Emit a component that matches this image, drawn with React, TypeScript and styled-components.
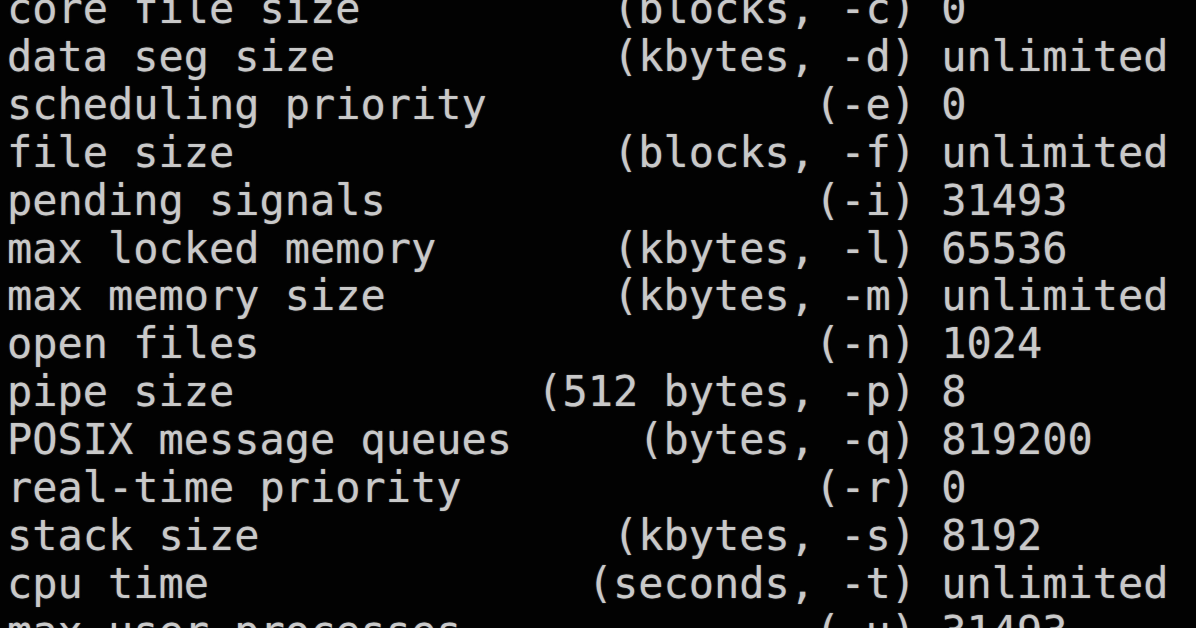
import React from "react";
import styled, { createGlobalStyle } from "styled-components";

const Global = createGlobalStyle`
  html, body { margin: 0; padding: 0; background: #000; overflow: hidden; }
  #root { width: 1196px; height: 628px; overflow: hidden; background: #000; }
`;

const Terminal = styled.div`
  width: 1196px;
  height: 628px;
  overflow: hidden;
  background: #020202;
  box-sizing: border-box;
  padding-left: 7px;
`;

const Output = styled.pre`
  margin: -15px 0 0 0;
  font-family: "DejaVu Sans Mono", monospace;
  font-size: 41.95px;
  line-height: 47.9px;
  color: #c9c9c9;
  text-shadow: 0 0 1.5px rgba(200, 200, 200, 0.55);
  white-space: pre;
`;

const lines = [
  "core file size          (blocks, -c) 0",
  "data seg size           (kbytes, -d) unlimited",
  "scheduling priority             (-e) 0",
  "file size               (blocks, -f) unlimited",
  "pending signals                 (-i) 31493",
  "max locked memory       (kbytes, -l) 65536",
  "max memory size         (kbytes, -m) unlimited",
  "open files                      (-n) 1024",
  "pipe size            (512 bytes, -p) 8",
  "POSIX message queues     (bytes, -q) 819200",
  "real-time priority              (-r) 0",
  "stack size              (kbytes, -s) 8192",
  "cpu time               (seconds, -t) unlimited",
  "max user processes              (-u) 31493",
];

export default function App() {
  return (
    <>
      <Global />
      <Terminal>
        <Output>{lines.join("\n")}</Output>
      </Terminal>
    </>
  );
}
